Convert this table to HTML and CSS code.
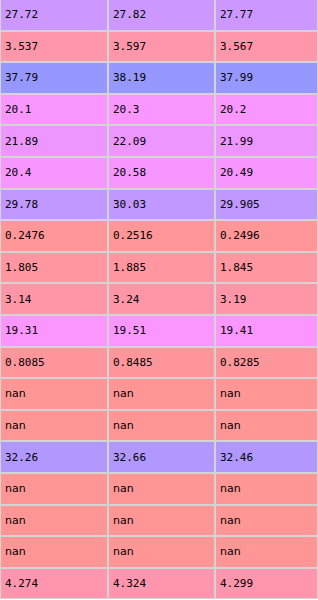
FILE: index.html
```html
<!DOCTYPE html>
<html>
<head>
<meta charset="utf-8">
<link rel="stylesheet" href="styles.css">
</head>
<body>
<table class="grid">
<tbody>
<tr class="r" style="background:#cc98ff"><td class="num">27.72</td><td class="num">27.82</td><td class="num">27.77</td></tr>
<tr class="r" style="background:#ff96a9"><td class="num">3.537</td><td class="num">3.597</td><td class="num">3.567</td></tr>
<tr class="r" style="background:#9698ff"><td class="num">37.79</td><td class="num">38.19</td><td class="num">37.99</td></tr>
<tr class="r" style="background:#f996ff"><td class="num">20.1</td><td class="num">20.3</td><td class="num">20.2</td></tr>
<tr class="r" style="background:#ee96ff"><td class="num">21.89</td><td class="num">22.09</td><td class="num">21.99</td></tr>
<tr class="r" style="background:#f796ff"><td class="num">20.4</td><td class="num">20.58</td><td class="num">20.49</td></tr>
<tr class="r" style="background:#c098ff"><td class="num">29.78</td><td class="num">30.03</td><td class="num">29.905</td></tr>
<tr class="r" style="background:#ff9697"><td class="num">0.2476</td><td class="num">0.2516</td><td class="num">0.2496</td></tr>
<tr class="r" style="background:#ff96a0"><td class="num">1.805</td><td class="num">1.885</td><td class="num">1.845</td></tr>
<tr class="r" style="background:#ff96a8"><td class="num">3.14</td><td class="num">3.24</td><td class="num">3.19</td></tr>
<tr class="r" style="background:#fb96ff"><td class="num">19.31</td><td class="num">19.51</td><td class="num">19.41</td></tr>
<tr class="r" style="background:#ff969c"><td class="num">0.8085</td><td class="num">0.8485</td><td class="num">0.8285</td></tr>
<tr class="r" style="background:#ff9696"><td class="nan">nan</td><td class="nan">nan</td><td class="nan">nan</td></tr>
<tr class="r" style="background:#ff9696"><td class="nan">nan</td><td class="nan">nan</td><td class="nan">nan</td></tr>
<tr class="r" style="background:#b098ff"><td class="num">32.26</td><td class="num">32.66</td><td class="num">32.46</td></tr>
<tr class="r" style="background:#ff9696"><td class="nan">nan</td><td class="nan">nan</td><td class="nan">nan</td></tr>
<tr class="r" style="background:#ff9696"><td class="nan">nan</td><td class="nan">nan</td><td class="nan">nan</td></tr>
<tr class="r" style="background:#ff9696"><td class="nan">nan</td><td class="nan">nan</td><td class="nan">nan</td></tr>
<tr class="r" style="background:#ff96ae"><td class="num">4.274</td><td class="num">4.324</td><td class="num">4.299</td></tr>
</tbody>
</table>
</body>
</html>
```
FILE: styles.css
```css
html, body {
  margin: 0;
  padding: 0;
  background: #ffffff;
  overflow: hidden;
}
.grid {
  border-collapse: separate;
  border-spacing: 0;
  width: 318px;
  table-layout: fixed;
  margin-top: -1px;
}
.grid td {
  border: 1px solid #d4d4d4;
  height: 29.6px;
  padding: 0 0 0 4px;
  vertical-align: middle;
  color: #000;
  white-space: nowrap;
  overflow: hidden;
}
.grid td:nth-child(1) { width: 102px; }
.grid td:nth-child(2) { width: 101px; }
.num {
  font-family: "DejaVu Sans Mono", monospace;
  font-size: 11px;
}
.nan {
  font-family: "DejaVu Sans", sans-serif;
  font-size: 11px;
}
```
